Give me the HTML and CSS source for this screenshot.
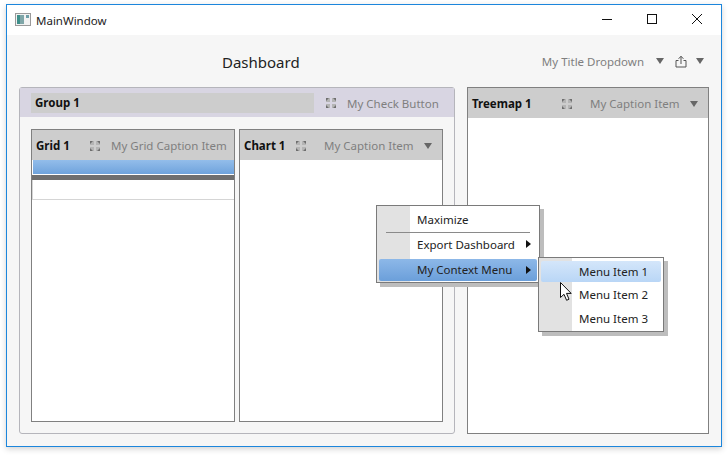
FILE: index.html
```html
<!DOCTYPE html>
<html lang="en">
<head>
  <meta charset="UTF-8" />
  <title>MainWindow</title>
  <link rel="stylesheet" href="styles.css">
</head>
<body>

  <div class="ventana">
    <!-- Barra de titulo -->
    <div class="barra">
      <svg class="icono-app" width="16" height="14" viewBox="0 0 16 14">
        <rect x="0.5" y="0.5" width="15" height="12" fill="#f2f2f2" stroke="#9a9a9a"/>
        <rect x="2" y="2" width="7" height="9" fill="#3f8f8a"/>
        <rect x="5" y="2" width="4" height="9" fill="#7fa6a8"/>
        <rect x="11" y="2" width="3" height="3" fill="#6f9fa8"/>
      </svg>
      <span class="barra-titulo">MainWindow</span>
      <div class="controles">
        <svg width="12" height="12" viewBox="0 0 12 12"><path d="M1 6.5H11" stroke="#111" fill="none"/></svg>
        <svg width="12" height="12" viewBox="0 0 12 12"><rect x="1.5" y="1.5" width="9" height="9" stroke="#111" fill="none"/></svg>
        <svg width="12" height="12" viewBox="0 0 12 12"><path d="M1 1L11 11M11 1L1 11" stroke="#111" fill="none"/></svg>
      </div>
    </div>

    <div class="contenido">
      <!-- Encabezado del dashboard -->
      <div class="encabezado">
        <h1>Dashboard</h1>
        <div class="acciones">
          <span class="gris">My Title Dropdown</span>
          <span class="flecha"></span>
          <svg class="compartir" width="12" height="13" viewBox="0 0 12 13">
            <path d="M3.5 5.5H1V12H11V5.5H8.5M6 9V1.5M3.6 3.8L6 1.2L8.4 3.8" stroke="#555" fill="none"/>
          </svg>
          <span class="flecha"></span>
        </div>
      </div>

      <div class="tablero">
        <!-- Grupo -->
        <section class="grupo">
          <div class="grupo-cab">
            <strong class="grupo-titulo">Group 1</strong>
            <svg class="expandir" width="10" height="10"><use href="#esquinas"/></svg>
            <span class="gris">My Check Button</span>
          </div>
          <div class="grupo-cuerpo">
            <div class="panel">
              <div class="panel-cab cab-grid">
                <strong>Grid 1</strong>
                <svg class="expandir" width="10" height="10"><use href="#esquinas"/></svg>
                <span class="gris">My Grid Caption Item</span>
              </div>
              <div class="fila-azul"></div>
              <div class="fila-oscura"></div>
              <div class="fila-blanca"></div>
            </div>
            <div class="panel">
              <div class="panel-cab cab-chart">
                <strong>Chart 1</strong>
                <svg class="expandir" width="10" height="10"><use href="#esquinas"/></svg>
                <span class="gris">My Caption Item</span>
                <span class="flecha"></span>
              </div>
            </div>
          </div>
        </section>

        <!-- Treemap -->
        <section class="panel panel-treemap">
          <div class="panel-cab cab-treemap">
            <strong>Treemap 1</strong>
            <svg class="expandir" width="10" height="10"><use href="#esquinas"/></svg>
            <span class="gris">My Caption Item</span>
            <span class="flecha"></span>
          </div>
        </section>
      </div>
    </div>
  </div>

  <!-- Menus contextuales -->
  <div class="menu menu-principal">
    <div class="item">Maximize</div>
    <div class="separador"></div>
    <div class="item">Export Dashboard<span class="sub"></span></div>
    <div class="item item-activo">My Context Menu<span class="sub"></span></div>
  </div>

  <div class="menu menu-sub">
    <div class="item item-claro">Menu Item 1</div>
    <div class="item">Menu Item 2</div>
    <div class="item">Menu Item 3</div>
  </div>

  <svg class="cursor" width="14" height="21" viewBox="0 0 14 21">
    <path d="M1.5 1.5V16.5L5 13.3L7.6 19.3L10 18.2L7.5 12.4H12.2Z" fill="#fff" stroke="#111"/>
  </svg>

  <svg class="oculto" width="0" height="0">
    <symbol id="esquinas" viewBox="0 0 10 10">
      <path d="M0 0H4V4H0ZM6 0H10V4H6ZM0 6H4V10H0ZM6 6H10V10H6Z" fill="#b4b4b4"/>
      <path d="M0 0H3L0 3ZM10 0V3L7 0ZM0 10V7L3 10ZM10 10H7L10 7Z" fill="#6e6e6e"/>
    </symbol>
  </svg>

</body>
</html>
```

FILE: styles.css
```css
* {
  box-sizing: border-box;
}

body {
  margin: 0;
  height: 455px;
  padding: 4px 6px 8px 6px;
  background: #fff;
  font-family: 'Noto Sans', 'Open Sans', sans-serif;
  font-size: 11.5px;
  color: #111;
  overflow: hidden;
}

.ventana {
  width: 716px;
  height: 443px;
  display: flex;
  flex-direction: column;
  border: 1px solid #1c86dc;
  box-shadow: 0 2px 6px rgba(0,0,0,0.18);
}

.barra {
  height: 30px;
  flex-shrink: 0;
  display: flex;
  align-items: center;
  background: #fff;
  padding: 0 0 2px 8px;
}

.icono-app {
  margin: 2px 5px 0 0;
}

.barra-titulo {
  color: #222;
  margin-top: 2px;
}

.controles {
  margin-left: auto;
  display: flex;
  gap: 33px;
  padding-right: 18px;
}

.contenido {
  flex: 1;
  display: flex;
  flex-direction: column;
  background: #f6f6f6;
  padding: 0 12px 12px 12px;
}

.encabezado {
  height: 52px;
  display: flex;
  align-items: center;
}

.encabezado h1 {
  margin: 2px 0 0 203px;
  font-size: 15px;
  font-weight: 400;
  color: #222;
}

.acciones {
  margin-left: auto;
  display: flex;
  align-items: center;
  padding-right: 5px;
}

.gris {
  color: #7f7f7f;
  white-space: nowrap;
}

.flecha {
  width: 0;
  height: 0;
  flex-shrink: 0;
  border-left: 4px solid transparent;
  border-right: 4px solid transparent;
  border-top: 6px solid #666;
}

.acciones .flecha {
  margin-left: 12px;
}

.compartir {
  margin-left: 11px;
}

.acciones .compartir + .flecha {
  margin-left: 9px;
}

.tablero {
  flex: 1;
  display: flex;
  gap: 12px;
  min-height: 0;
}

.grupo {
  width: 436px;
  display: flex;
  flex-direction: column;
  border: 1px solid #b5b5bb;
  border-radius: 3px;
}

.grupo-cab {
  height: 29px;
  display: flex;
  align-items: center;
  background: #d8d5e2;
  padding-left: 11px;
}

.grupo-titulo {
  width: 283px;
  height: 20px;
  flex-shrink: 0;
  line-height: 20px;
  padding-left: 4px;
  background: #cdcdcd;
}

.grupo-cab .expandir {
  margin: 0 11px 0 12px;
}

.grupo-cab .gris {
  margin-top: 1px;
}

.grupo-cuerpo {
  flex: 1;
  display: flex;
  gap: 4px;
  padding: 12px 11px 11px 11px;
}

.panel {
  width: 204px;
  display: flex;
  flex-direction: column;
  background: #fff;
  border: 1px solid #808080;
}

.panel-treemap {
  width: 242px;
}

.panel-cab {
  height: 30px;
  flex-shrink: 0;
  display: flex;
  align-items: center;
  background: #cdcdcd;
  padding: 1px 0 0 4px;
}

.panel-cab strong {
  white-space: nowrap;
}

.cab-grid strong { width: 54px; }
.cab-chart strong { width: 52px; }
.cab-treemap strong { width: 90px; }

.panel-cab .gris {
  margin-left: 18px;
}

.cab-grid .gris {
  margin-left: 11px;
}

.panel-cab .flecha {
  margin-left: 10px;
}

.fila-azul {
  height: 14px;
  margin-left: 1px;
  background: linear-gradient(to bottom, #93bdea, #6fa3dc);
}

.fila-oscura {
  height: 5px;
  margin-top: 1px;
  background: #6f6f6f;
}

.fila-blanca {
  height: 20px;
  background: #fff;
  border-left: 1px solid #d5d5d5;
  border-bottom: 1px solid #d5d5d5;
}

/* menus */
.menu {
  position: absolute;
  background: linear-gradient(to right, #e2e2e2 var(--franja), #fff var(--franja));
  border: 1px solid #7a7a7a;
  box-shadow: 4px 4px 0 #bdbdbd;
  padding: 2px;
}

.menu-principal {
  --franja: 33px;
  left: 376px;
  top: 205px;
  width: 164px;
  height: 78px;
}

.menu-sub {
  --franja: 33px;
  left: 538px;
  top: 257px;
  width: 126px;
  height: 75px;
}

.item {
  position: relative;
  height: 24px;
  line-height: 24px;
  padding-left: 38px;
  border-radius: 2px;
  color: #222;
  white-space: nowrap;
}

.separador {
  height: 1px;
  margin: 0 7px;
  background: #8a8a8a;
}

.item-activo {
  height: 22px;
  line-height: 22px;
  margin-top: 2px;
  background: linear-gradient(to bottom, #8db8e8, #6b9fda);
}

.item-claro {
  height: 21px;
  line-height: 21px;
  margin: 1px 0;
  background: linear-gradient(to bottom, #d4e6fa, #b9d6f6);
}

.sub {
  position: absolute;
  right: 6px;
  top: 7px;
  width: 0;
  height: 0;
  border-top: 4px solid transparent;
  border-bottom: 4px solid transparent;
  border-left: 5px solid #111;
}

.cursor {
  position: absolute;
  left: 559px;
  top: 281px;
}

.oculto {
  position: absolute;
}
```
